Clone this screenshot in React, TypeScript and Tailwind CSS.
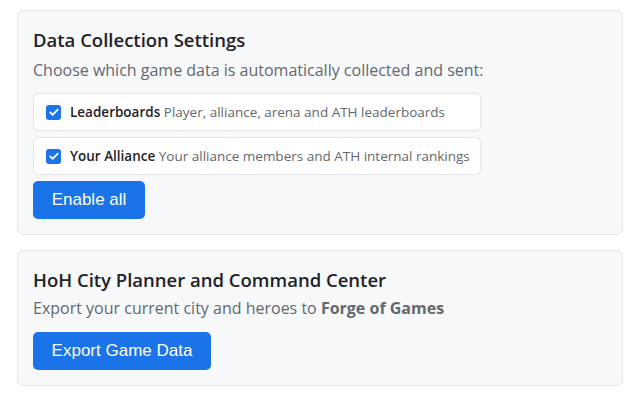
import { useState } from 'react';

const body = { fontFamily: '"Open Sans", "Noto Sans", sans-serif' };
const btnFont = { fontFamily: '"Liberation Sans", Arial, sans-serif' };

function Check({ checked, onChange }: { checked: boolean; onChange: () => void }) {
  return (
    <button
      type="button"
      onClick={onChange}
      className={`flex h-[15px] w-[15px] shrink-0 items-center justify-center rounded-[3px] ${
        checked ? 'bg-[#1a73e8]' : 'border border-gray-400 bg-white'
      }`}
    >
      {checked && (
        <svg viewBox="0 0 16 16" className="h-[12px] w-[12px]" fill="none" stroke="white" strokeWidth="2.4" strokeLinecap="round" strokeLinejoin="round">
          <path d="M3 8.5l3.2 3.2L13 4.8" />
        </svg>
      )}
    </button>
  );
}

function Option({ title, desc, checked, onChange }: { title: string; desc: string; checked: boolean; onChange: () => void }) {
  return (
    <div className="flex h-[38px] w-[448px] items-center gap-[9px] rounded-[5px] border border-[#e3e5e8] bg-white px-[12px] text-[13.5px]">
      <Check checked={checked} onChange={onChange} />
      <span className="whitespace-nowrap">
        <b className="font-semibold text-[#1f2328]">{title}</b>{' '}
        <span className="text-[#63686e]">{desc}</span>
      </span>
    </div>
  );
}

export default function App() {
  const [boards, setBoards] = useState(true);
  const [alliance, setAlliance] = useState(true);

  return (
    <div className="min-h-[400px] bg-white px-[17px] pt-[10px]" style={body}>
      <section className="rounded-[6px] border border-[#e3e5e8] bg-[#f7f8fa] px-[15px] pb-[15px] pt-[15px]">
        <h2 className="text-[18.5px] font-semibold leading-[28px] text-[#1f2328]">Data Collection Settings</h2>
        <p className="mt-[4px] text-[16px] leading-[24px] text-[#63686e]">
          Choose which game data is automatically collected and sent:
        </p>
        <div className="mt-[11px] flex flex-col gap-[6px]">
          <Option
            title="Leaderboards"
            desc="Player, alliance, arena and ATH leaderboards"
            checked={boards}
            onChange={() => setBoards(!boards)}
          />
          <Option
            title="Your Alliance"
            desc="Your alliance members and ATH internal rankings"
            checked={alliance}
            onChange={() => setAlliance(!alliance)}
          />
        </div>
        <button
          type="button"
          onClick={() => {
            setBoards(true);
            setAlliance(true);
          }}
          className="mt-[6px] h-[38px] w-[112px] rounded-[5px] bg-[#1a73e8] text-[17px] text-white"
          style={btnFont}
        >
          Enable all
        </button>
      </section>

      <section className="mt-[15px] rounded-[6px] border border-[#e3e5e8] bg-[#f7f8fa] px-[15px] pb-[15px] pt-[15px]">
        <h2 className="text-[18.5px] font-semibold leading-[28px] text-[#1f2328]">HoH City Planner and Command Center</h2>
        <p className="mt-[2px] text-[16px] leading-[24px] text-[#63686e]">
          Export your current city and heroes to <b className="font-bold">Forge of Games</b>
        </p>
        <button
          type="button"
          className="mt-[12px] h-[38px] w-[178px] rounded-[5px] bg-[#1a73e8] text-[17px] text-white"
          style={btnFont}
        >
          Export Game Data
        </button>
      </section>
    </div>
  );
}
